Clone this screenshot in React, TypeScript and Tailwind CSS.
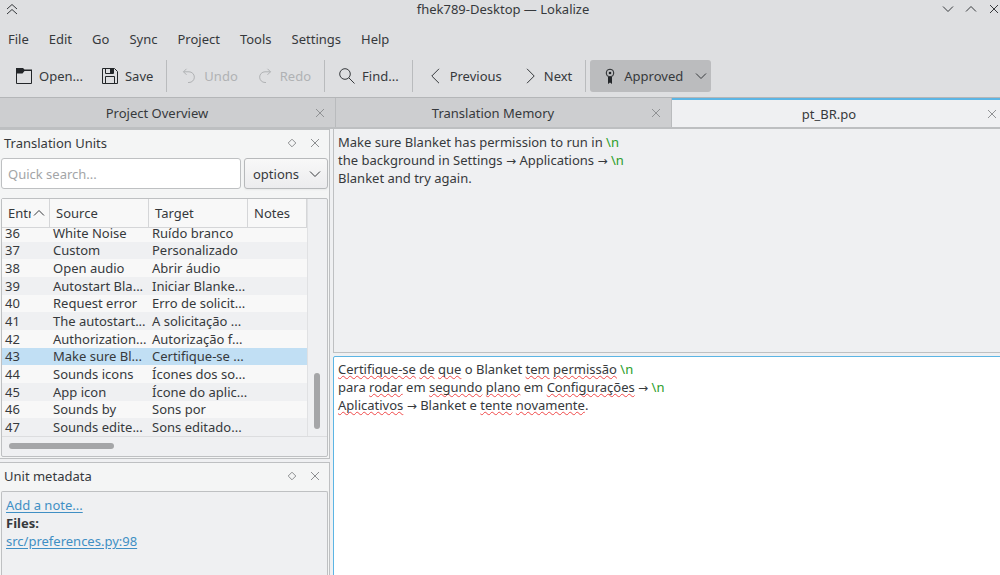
import type { ReactNode } from "react";

type IconProps = { children: ReactNode; className?: string };

const Icon = ({ children, className = "" }: IconProps) => (
  <svg
    viewBox="0 0 16 16"
    fill="none"
    stroke="currentColor"
    className={`size-4 shrink-0 ${className}`}
    aria-hidden="true"
  >
    {children}
  </svg>
);

const OpenIcon = () => (
  <Icon className="text-[#232629]">
    <path d="M0 0h7l1.500 1.500H16V3H8.500L6.500 5.500H0z" fill="currentColor" stroke="none" />
    <path d="M.5 4v11.500h15V2" />
  </Icon>
);

const SaveIcon = () => (
  <Icon className="text-[#232629]">
    <path d="M.5.5h12l3 3v12H.5z" />
    <path d="M3.500.5v5h8v-5M3.500 15.500v-7h9v7" />
    <path d="M8 1h3v4H8z" fill="currentColor" stroke="none" />
  </Icon>
);

const UndoIcon = () => (
  <Icon>
    <path d="M5.500.8 2.500 3.800l3 3M2.500 3.800H8a5.300 5.300 0 0 1 0 10.700H7" />
  </Icon>
);

const RedoIcon = () => (
  <Icon>
    <path d="m10.500.8 3 3-3 3M13.500 3.800H8a5.300 5.300 0 0 0 0 10.700h1" />
  </Icon>
);

const FindIcon = () => (
  <Icon>
    <circle cx="6" cy="6" r="5.300" />
    <path d="m9.800 9.800 5.700 5.700" />
  </Icon>
);

const PreviousIcon = () => (
  <Icon>
    <path d="M12 .8 4.800 8l7.200 7.200" />
  </Icon>
);

const NextIcon = () => (
  <Icon>
    <path d="M6 .8 13.200 8 6 15.200" />
  </Icon>
);

const ApprovedIcon = () => (
  <Icon className="text-[#232629]">
    <circle cx="8" cy="5" r="3.800" />
    <circle cx="8" cy="5" r="1.300" fill="currentColor" stroke="none" />
    <path d="M6 9h4v7l-2-1.500L6 16z" fill="currentColor" stroke="none" />
  </Icon>
);

const ChevronDown = () => (
  <Icon>
    <path d="m3 5.500 5 5 5-5" />
  </Icon>
);

const ChevronUp = () => (
  <Icon>
    <path d="m3 10.500 5-5 5 5" />
  </Icon>
);

const CloseIcon = () => (
  <Icon>
    <path d="m4 4 8 8M12 4l-8 8" />
  </Icon>
);

const FloatIcon = () => (
  <Icon>
    <path d="m8 4.200 3.800 3.800L8 11.800 4.200 8z" />
  </Icon>
);

const menus = ["File", "Edit", "Go", "Sync", "Project", "Tools", "Settings", "Help"];

const tabs = [
  { title: "Project Overview", active: false },
  { title: "Translation Memory", active: false },
  { title: "pt_BR.po", active: true },
];

const units = [
  { entry: 36, source: "White Noise", target: "Ruído branco" },
  { entry: 37, source: "Custom", target: "Personalizado" },
  { entry: 38, source: "Open audio", target: "Abrir áudio" },
  { entry: 39, source: "Autostart Bla...", target: "Iniciar Blanke..." },
  { entry: 40, source: "Request error", target: "Erro de solicit..." },
  { entry: 41, source: "The autostart...", target: "A solicitação ..." },
  { entry: 42, source: "Authorization...", target: "Autorização f..." },
  { entry: 43, source: "Make sure Bl...", target: "Certifique-se ..." },
  { entry: 44, source: "Sounds icons", target: "Ícones dos so..." },
  { entry: 45, source: "App icon", target: "Ícone do aplic..." },
  { entry: 46, source: "Sounds by", target: "Sons por" },
  { entry: 47, source: "Sounds edite...", target: "Sons editado..." },
];

const SELECTED_ENTRY = 43;

type ToolButtonProps = { icon: ReactNode; label: string; disabled?: boolean };

const ToolButton = ({ icon, label, disabled }: ToolButtonProps) => (
  <button
    type="button"
    disabled={disabled}
    className="flex h-8 items-center gap-[7px] pr-[9px] pl-2.5 disabled:text-[#b0b2b4]"
  >
    {icon}
    {label}
  </button>
);

const ToolSeparator = () => <div className="mx-1 h-8 w-px bg-[#b9bbbd]" />;

const TitleBar = () => (
  <div className="flex h-5 items-center justify-between pr-1.5 pb-0.5 pl-1">
    <button type="button" aria-label="Keep above" className="flex w-[62px]">
      <Icon>
        <path d="m3 8 5-4.500L13 8M3 13l5-4.500 5 4.500" />
      </Icon>
    </button>
    <h1>fhek789-Desktop — Lokalize</h1>
    <div className="flex gap-[7px]">
      <button type="button" aria-label="Minimize">
        <ChevronDown />
      </button>
      <button type="button" aria-label="Maximize">
        <ChevronUp />
      </button>
      <button type="button" aria-label="Close">
        <CloseIcon />
      </button>
    </div>
  </div>
);

const Toolbar = () => (
  <div className="flex h-[39px] items-center pb-[3px] pl-1.5">
    <ToolButton icon={<OpenIcon />} label="Open..." />
    <ToolButton icon={<SaveIcon />} label="Save" />
    <ToolSeparator />
    <ToolButton icon={<UndoIcon />} label="Undo" disabled />
    <ToolButton icon={<RedoIcon />} label="Redo" disabled />
    <ToolSeparator />
    <ToolButton icon={<FindIcon />} label="Find..." />
    <ToolSeparator />
    <ToolButton icon={<PreviousIcon />} label="Previous" />
    <ToolButton icon={<NextIcon />} label="Next" />
    <ToolSeparator />
    <button
      type="button"
      aria-pressed="true"
      className="flex h-8 items-center gap-1.5 rounded-[3px] bg-[#bbbcbe] pr-0.5 pl-3"
    >
      <ApprovedIcon />
      <span className="mr-1">Approved</span>
      <ChevronDown />
    </button>
  </div>
);

const TabBar = () => (
  <div
    role="tablist"
    className="grid grid-cols-3 border-t border-b-2 border-t-[#b4b6b8] border-b-[#bdbfc1]"
  >
    {tabs.map((tab) => (
      <div
        key={tab.title}
        className={`flex h-[29px] items-center border-r border-r-[#b9bbbd] pr-[7px] pl-0.5 ${
          tab.active ? "border-t-2 border-t-[#5cb5e4] bg-[#eff0f2]" : "bg-[#cdced0]"
        }`}
      >
        <button type="button" role="tab" aria-selected={tab.active} className="flex-1 text-center">
          {tab.title}
        </button>
        <button type="button" aria-label={`Close ${tab.title}`} className="text-[#909294]">
          <CloseIcon />
        </button>
      </div>
    ))}
  </div>
);

const DockTitle = ({ title }: { title: string }) => (
  <div className="flex h-7 items-center justify-between pr-[5px] pb-0.5 pl-[3px]">
    <h2>{title}</h2>
    <div className="flex gap-[7px] text-[#8d8f91]">
      <button type="button" aria-label={`Float ${title}`}>
        <FloatIcon />
      </button>
      <button type="button" aria-label={`Close ${title}`}>
        <CloseIcon />
      </button>
    </div>
  </div>
);

// Slightly taller than its row, so it covers the top of the first visible unit
const headCell = "relative -mb-1 flex h-[29px] items-center border-r border-b border-[#d5d6d8] bg-[#f8f8f8] pl-1.5";

const UnitsTable = () => (
  <div className="flex flex-col rounded-xs border border-[#bec0c2] bg-[#eff0f2]">
    <div className="flex">
      <table className="w-[305px] table-fixed border-collapse text-left">
        <colgroup>
          <col className="w-12" />
          <col className="w-[99px]" />
          <col className="w-[99px]" />
          <col />
        </colgroup>
        <thead className="h-[25px]">
          <tr>
            <th className="p-0 align-top font-normal">
              <div className={headCell}>
                <span className="w-[23px] overflow-hidden">Entry</span>
                <ChevronUp />
              </div>
            </th>
            <th className="p-0 align-top font-normal">
              <div className={headCell}>Source</div>
            </th>
            <th className="p-0 align-top font-normal">
              <div className={headCell}>Target</div>
            </th>
            <th className="p-0 align-top font-normal">
              <div className={headCell}>Notes</div>
            </th>
          </tr>
        </thead>
        <tbody className="h-[212px] leading-4">
          {units.map((unit) => (
            <tr
              key={unit.entry}
              aria-selected={unit.entry === SELECTED_ENTRY}
              className="whitespace-nowrap odd:bg-[#f8f8f8] even:bg-[#eff0f2] aria-selected:bg-[#c1dff4]"
            >
              <td className="p-0 pl-[3px]">{unit.entry}</td>
              <td className="p-0 pl-[3px]">{unit.source}</td>
              <td className="p-0 pl-[3px]">{unit.target}</td>
              <td className="p-0" />
            </tr>
          ))}
        </tbody>
      </table>
      <div className="flex flex-1 flex-col items-end border-l border-[#e0e1e3] pr-[7px] pb-[7px]">
        <div className="mt-auto h-14 w-1.5 rounded-full bg-[#a5a6a8]" />
      </div>
    </div>
    <div className="h-5 border-t border-[#dcdddf] pt-1.5 pl-[7px]">
      <div className="h-1.5 w-[105px] rounded-full bg-[#a5a6a8]" />
    </div>
  </div>
);

const TranslationUnits = () => (
  <section className="flex flex-col border border-l-0 border-[#bec0c2] bg-[#f4f5f5] pr-px pb-px pl-px">
    <DockTitle title="Translation Units" />
    <div className="mb-[9px] flex gap-[3px]">
      <input
        type="search"
        aria-label="Quick search"
        placeholder="Quick search..."
        className="h-[31px] min-w-0 flex-1 rounded-[3px] border border-[#bec0c2] bg-white px-1.5 placeholder:text-[#a3a5a7]"
      />
      <button
        type="button"
        className="flex h-[31px] w-[84px] items-center justify-between rounded-[3px] border border-[#b7b9bb] bg-linear-to-b from-[#f8f8f8] to-[#ececee] pr-1 pl-2 shadow-xs"
      >
        options
        <ChevronDown />
      </button>
    </div>
    <UnitsTable />
  </section>
);

const UnitMetadata = () => (
  <section className="flex flex-1 flex-col border border-b-0 border-l-0 border-[#bec0c2] bg-[#f4f5f5] pr-px pl-px">
    <DockTitle title="Unit metadata" />
    <div className="flex-1 rounded-t-xs border border-b-0 border-[#bec0c2] bg-[#eff0f2] px-1 pt-1 leading-[18px]">
      <p>
        <a href="#note" className="text-[#3f8fc4] underline underline-offset-2">
          Add a note...
        </a>
      </p>
      <p className="font-bold">Files:</p>
      <p>
        <a href="#source" className="text-[#3f8fc4] underline underline-offset-2">
          src/preferences.py:98
        </a>
      </p>
    </div>
  </section>
);

const Newline = () => <span className="text-[#2a9d2a]">\n</span>;

const Arrow = () => <span className="font-['DejaVu_Sans',sans-serif] text-[12px] leading-none">→</span>;

const Misspelled = ({ children }: { children: ReactNode }) => (
  <span className="underline decoration-[#f04848] decoration-wavy decoration-1 underline-offset-1 [text-decoration-skip-ink:none]">
    {children}
  </span>
);

const SourceText = () => (
  <div
    role="textbox"
    aria-label="Source text"
    aria-readonly="true"
    className="flex-1 basis-0 border border-t-0 border-[#bec0c2] bg-[#eff0f2] px-1 pt-1 leading-[18px]"
  >
    <p>
      Make sure Blanket has permission to run in <Newline />
    </p>
    <p>
      the background in Settings <Arrow /> Applications <Arrow /> <Newline />
    </p>
    <p>Blanket and try again.</p>
  </div>
);

const TargetText = () => (
  <div
    role="textbox"
    aria-label="Target text"
    contentEditable
    suppressContentEditableWarning
    spellCheck={false}
    className="flex-1 basis-0 rounded-xs border border-[#5cb5e4] bg-white px-1 pt-[3px] leading-[18px] outline-none"
  >
    <p>
      <Misspelled>Certifique-se</Misspelled> <Misspelled>de</Misspelled> <Misspelled>que</Misspelled> o Blanket{" "}
      <Misspelled>tem</Misspelled> <Misspelled>permissão</Misspelled> <Newline />
    </p>
    <p>
      para <Misspelled>rodar</Misspelled> em <Misspelled>segundo</Misspelled> <Misspelled>plano</Misspelled> em{" "}
      <Misspelled>Configurações</Misspelled> <Arrow /> <Newline />
    </p>
    <p>
      <Misspelled>Aplicativos</Misspelled> <Arrow /> Blanket e <Misspelled>tente</Misspelled>{" "}
      <Misspelled>novamente</Misspelled>.
    </p>
  </div>
);

export default function App() {
  return (
    <div className="h-screen overflow-hidden bg-[#dedfe1] font-['Noto_Sans',sans-serif] text-[13px] leading-[18px] text-[#36393c]">
      {/* the window runs a little past the right and bottom edges of the screen */}
      <div className="-mr-2 flex h-[calc(100vh+4px)] flex-col">
        <TitleBar />
        <nav className="flex h-[38px] items-center gap-5 pl-2">
          {menus.map((menu) => (
            <button key={menu} type="button">
              {menu}
            </button>
          ))}
        </nav>
        <Toolbar />
        <TabBar />
        <main className="flex min-h-0 flex-1 gap-[3px] bg-[#eff0f2]">
          <aside className="flex w-[330px] shrink-0 flex-col gap-[3px]">
            <TranslationUnits />
            <UnitMetadata />
          </aside>
          <div className="flex min-w-0 flex-1 flex-col gap-[3px]">
            <SourceText />
            <TargetText />
          </div>
        </main>
      </div>
    </div>
  );
}
